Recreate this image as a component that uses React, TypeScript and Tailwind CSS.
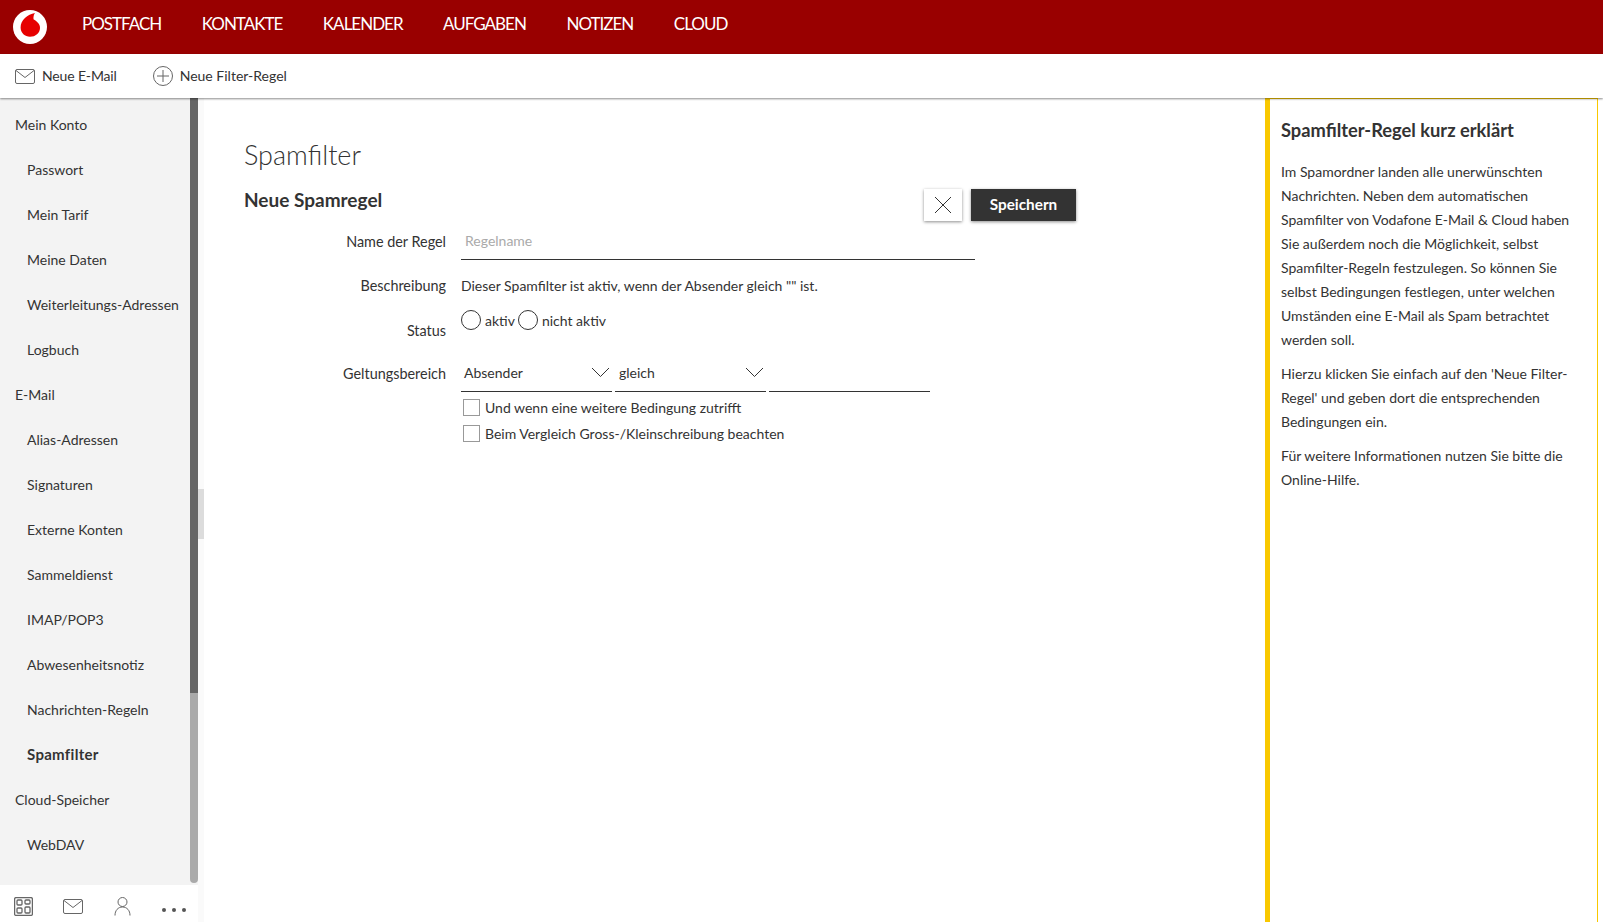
import React from "react";

const font = { fontFamily: '"Lato", "Liberation Sans", sans-serif' };

const menu: [string, number, boolean?][] = [
  ["Mein Konto", 0],
  ["Passwort", 1],
  ["Mein Tarif", 1],
  ["Meine Daten", 1],
  ["Weiterleitungs-Adressen", 1],
  ["Logbuch", 1],
  ["E-Mail", 0],
  ["Alias-Adressen", 1],
  ["Signaturen", 1],
  ["Externe Konten", 1],
  ["Sammeldienst", 1],
  ["IMAP/POP3", 1],
  ["Abwesenheitsnotiz", 1],
  ["Nachrichten-Regeln", 1],
  ["Spamfilter", 1, true],
  ["Cloud-Speicher", 0],
  ["WebDAV", 1],
];

function Logo() {
  return (
    <svg width="34" height="34" viewBox="0 0 34 34">
      <circle cx="17" cy="17" r="17" fill="#fff" />
      <path d="M22 3C14.500 4.300 7.600 10 7.600 17.500 7.600 22.800 12 26.800 17 26.800 22.500 26.800 27 23 27 18 27 13.500 23.500 11.200 20.500 9.300 20.300 6.800 20.800 4.500 22 3z" fill="#e60000" />
    </svg>
  );
}

function Mail({ size = 20 }: { size?: number }) {
  return (
    <svg width={size} height={(size * 15) / 20} viewBox="0 0 20 15" fill="none" stroke="#666" strokeWidth="1">
      <rect x="0.5" y="0.5" width="19" height="14" rx="1.500" />
      <path d="M1 1.500 10 8.500 19 1.500" />
    </svg>
  );
}

function Chevron() {
  return (
    <svg width="19" height="11" viewBox="0 0 19 11" fill="none" stroke="#333" strokeWidth="1">
      <path d="M1 1 9.500 9.500 18 1" />
    </svg>
  );
}

export default function App() {
  return (
    <div className="flex h-[922px] w-[1603px] flex-col overflow-hidden bg-white text-[14px] text-[#333]" style={font}>
      <header className="flex h-[54px] shrink-0 items-center bg-[#990000] pl-[13px] text-white">
        <Logo />
        <nav className="ml-[35px] flex gap-[40.500px] pb-[7px] text-[17px] tracking-[-1px]">
          <span>POSTFACH</span>
          <span>KONTAKTE</span>
          <span>KALENDER</span>
          <span>AUFGABEN</span>
          <span>NOTIZEN</span>
          <span>CLOUD</span>
        </nav>
      </header>

      <div className="z-10 flex h-[44px] shrink-0 items-center bg-white pl-[15px] shadow-[0_1px_2px_rgba(0,0,0,0.45)]">
        <Mail />
        <span className="ml-[7px] pb-[2px] tracking-[-0.15px]">Neue E-Mail</span>
        <svg className="ml-[36px]" width="20" height="20" viewBox="0 0 20 20" fill="none" stroke="#666" strokeWidth="1">
          <circle cx="10" cy="10" r="9.500" />
          <path d="M4 10h12M10 4v12" />
        </svg>
        <span className="ml-[7px] pb-[2px]">Neue Filter-Regel</span>
      </div>

      <div className="flex min-h-0 flex-1">
        <aside className="flex w-[198px] shrink-0 flex-col">
          <div className="flex min-h-0 flex-1 bg-[#f3f3f3]">
            <ul className="w-[190px] pt-[4px]">
              {menu.map(([label, level, active]) => (
                <li
                  key={label}
                  className={`flex h-[45px] items-center ${level ? "pl-[27px]" : "pl-[15px]"} ${active ? "text-[15px] font-bold tracking-[0.3px]" : ""}`}
                >
                  {label}
                </li>
              ))}
            </ul>
            <div className="flex w-[8px] flex-col">
              <div className="h-[595px] bg-[#666]" />
              <div className="h-[190px] rounded-b-sm bg-[#aaa]" />
            </div>
          </div>
          <div className="flex h-[37px] shrink-0 items-center bg-white pt-[5px]">
            <svg className="ml-[14px]" width="19" height="19" viewBox="0 0 19 19" fill="none" stroke="#666" strokeWidth="1.300">
              <rect x="0.600" y="0.600" width="17.800" height="17.800" rx="1.500" />
              <rect x="3" y="3" width="5" height="5" rx="1" />
              <rect x="11" y="3" width="5" height="4" rx="1" />
              <rect x="3" y="11" width="5" height="5" rx="1" />
              <rect x="11" y="10" width="5" height="6" rx="1" />
            </svg>
            <span className="ml-[30px]">
              <Mail />
            </span>
            <svg className="ml-[31px]" width="17" height="19" viewBox="0 0 17 19" fill="none" stroke="#666" strokeWidth="1">
              <circle cx="8.500" cy="5" r="4.500" />
              <path d="M1 18.500c0-5 3-8.500 7.500-8.500s7.500 3.500 7.500 8.500" />
            </svg>
            <span className="ml-[31px] mt-[8px] flex gap-[6px]">
              <i className="size-[4px] rounded-full bg-[#555]" />
              <i className="size-[4px] rounded-full bg-[#555]" />
              <i className="size-[4px] rounded-full bg-[#555]" />
            </span>
          </div>
        </aside>

        <div className="flex w-[6px] shrink-0 flex-col bg-[#fafafa]">
          <div className="mt-[391px] h-[50px] bg-[#dcdcdc]" />
        </div>

        <main className="min-w-0 flex-1 pl-[40px] pt-[38px]">
          <h1 className="text-[27px] leading-[38px] font-light">Spamfilter</h1>
          <div className="flex w-[832px] justify-between">
            <h2 className="mt-[14px] text-[19px] leading-[24px] font-bold">Neue Spamregel</h2>
            <div className="mt-[15px] flex h-[32px] gap-[9px]">
              <button className="flex w-[38px] items-center justify-center bg-white shadow-[0_1px_3px_rgba(0,0,0,0.45)]">
                <svg width="18" height="18" viewBox="0 0 18 18" stroke="#333" strokeWidth="1">
                  <path d="M1 1 17 17M17 1 1 17" />
                </svg>
              </button>
              <button className="w-[105px] bg-[#333] pb-[2px] text-[15.300px] font-bold text-white shadow-[0_1px_3px_rgba(0,0,0,0.45)]">
                Speichern
              </button>
            </div>
          </div>

          <div className="mt-[1px] grid grid-cols-[202px_1fr] gap-x-[15px]">
            <div className="flex h-[38px] items-center justify-end pt-[2px] text-[14.400px]">Name der Regel</div>
            <div className="flex h-[38px] w-[514px] items-center border-b border-[#333] pb-[1px] pl-[4px] text-[#aaa]">Regelname</div>

            <div className="flex h-[40px] items-center justify-end pt-[11px] text-[14.400px]">Beschreibung</div>
            <div className="flex h-[40px] items-center pt-[11px]">Dieser Spamfilter ist aktiv, wenn der Absender gleich "" ist.</div>

            <div className="flex h-[44px] items-center justify-end pt-[17px] text-[14.400px]">Status</div>
            <div className="flex h-[44px] items-center pb-[4px]">
              <span className="size-[20px] rounded-full border border-[#333]" />
              <span className="ml-[4px]">aktiv</span>
              <span className="ml-[3px] size-[20px] rounded-full border border-[#333]" />
              <span className="ml-[4px]">nicht aktiv</span>
            </div>

            <div className="flex h-[48px] items-center justify-end pt-[12px] text-[14.400px]">Geltungsbereich</div>
            <div className="flex h-[48px] gap-[3px] pt-[10px]">
              <div className="flex w-[151px] items-center justify-between border-b border-[#333] pl-[3px] pr-[2px]">
                Absender <Chevron />
              </div>
              <div className="flex w-[151px] items-center justify-between border-b border-[#333] pl-[4px] pr-[2px]">
                gleich <Chevron />
              </div>
              <div className="w-[161px] border-b border-[#333]" />
            </div>

            <div />
            <div className="flex flex-col gap-[9px] pl-[2px] pt-[7px]">
              <label className="flex h-[17px] items-center gap-[5px]">
                <span className="size-[17px] border border-[#999]" />
                Und wenn eine weitere Bedingung zutrifft
              </label>
              <label className="flex h-[17px] items-center gap-[5px]">
                <span className="size-[17px] border border-[#999]" />
                Beim Vergleich Gross-/Kleinschreibung beachten
              </label>
            </div>
          </div>
        </main>

        <aside className="mr-[5px] w-[333px] shrink-0 border-t border-r border-l-[5px] border-[#f9c800] pl-[11px] pt-[18px] leading-[24px]">
          <h3 className="text-[18.300px] leading-[26px] font-bold">Spamfilter-Regel kurz erklärt</h3>
          <p className="mt-[17px]">
            Im Spamordner landen alle unerwünschten<br />
            Nachrichten. Neben dem automatischen<br />
            Spamfilter von Vodafone E-Mail &amp; Cloud haben<br />
            Sie außerdem noch die Möglichkeit, selbst<br />
            Spamfilter-Regeln festzulegen. So können Sie<br />
            selbst Bedingungen festlegen, unter welchen<br />
            Umständen eine E-Mail als Spam betrachtet<br />
            werden soll.
          </p>
          <p className="mt-[10px]">
            Hierzu klicken Sie einfach auf den 'Neue Filter-<br />
            Regel' und geben dort die entsprechenden<br />
            Bedingungen ein.
          </p>
          <p className="mt-[10px]">
            Für weitere Informationen nutzen Sie bitte die<br />
            Online-Hilfe.
          </p>
        </aside>
      </div>
    </div>
  );
}
